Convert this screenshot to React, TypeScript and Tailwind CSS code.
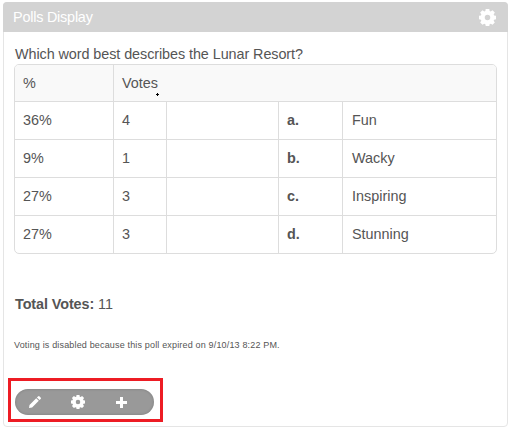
import React from "react";

const rows = [
  { percent: "36%", votes: "4", key: "a.", label: "Fun" },
  { percent: "9%", votes: "1", key: "b.", label: "Wacky" },
  { percent: "27%", votes: "3", key: "c.", label: "Inspiring" },
  { percent: "27%", votes: "3", key: "d.", label: "Stunning" },
];

function Gear({ className }: { className: string }) {
  return (
    <svg viewBox="0 0 16 16" className={className} fill="currentColor">
      <path
        fillRule="evenodd"
        d="M6.3 0h3.4l.3 1.9 1 .4 1.7-1.1 2.2 2.2-1.1 1.7.4 1 1.8.3v3.3l-1.8.4-.4 1 1.1 1.6-2.2 2.2-1.7-1-1 .4-.3 1.7H6.3L6 14.3l-1-.4-1.7 1-2.2-2.2 1.1-1.6-.4-1L0 9.7V6.4l1.8-.3.4-1-1.1-1.7 2.2-2.2L5 2.3l1-.4zM8 5.4a2.6 2.6 0 1 0 0 5.2 2.6 2.6 0 0 0 0-5.2z"
      />
    </svg>
  );
}

export default function App() {
  return (
    <div className="h-[431px] w-[511px] bg-white pl-[3px] pt-[2px] font-['Liberation_Sans',Arial,sans-serif] text-[14.4px] leading-5 text-[#555]">
      <section className="flex h-[425px] w-[505px] flex-col rounded-[4px] border border-[#e5e5e5]">
        <header className="-mx-px -mt-px flex h-[30px] shrink-0 items-center justify-between rounded-t-[4px] bg-[#d3d3d3] pl-[10px] pr-3 text-white">
          <h1 className="tracking-[-0.21px]">Polls Display</h1>
          <Gear className="size-[17px]" />
        </header>
        <div className="flex flex-col pl-[10px] pt-[12px]">
          <p className="h-5 pl-px tracking-[-0.075px]">Which word best describes the Lunar Resort?</p>
          <div className="h-[190px] w-[483px] overflow-hidden rounded-[5px] border border-[#ddd]">
            <div className="grid h-9 grid-cols-[98px_1fr] bg-[#f9f9f9]">
              <div className="px-2 pt-2">%</div>
              <div className="relative border-l border-[#ddd] px-2 pt-2">
                Votes
                <span className="absolute left-[42px] top-[29px] h-px w-[3px] bg-black" />
                <span className="absolute left-[43px] top-[28px] h-[3px] w-px bg-black" />
              </div>
            </div>
            {rows.map((row) => (
              <div key={row.key} className="grid h-[38px] grid-cols-[98px_53px_112px_64px_1fr] border-t border-[#ddd]">
                <div className="px-2 pt-2">{row.percent}</div>
                <div className="border-l border-[#ddd] px-2 pt-2">{row.votes}</div>
                <div className="border-l border-[#ddd]" />
                <div className="border-l border-[#ddd] px-2 pt-2 font-bold">{row.key}</div>
                <div className="border-l border-[#ddd] pl-[9px] pt-2">{row.label}</div>
              </div>
            ))}
          </div>
          <p className="mt-10 pl-px tracking-[-0.09px]"><strong>Total Votes:</strong> 11</p>
          <p className="mt-[25px] h-3 text-[9px] leading-3 tracking-[0.165px]">
            Voting is disabled because this poll expired on 9/10/13 8:22 PM.
          </p>
          <div className="-ml-[6px] mt-[27px] h-[44px] w-[155px] border-[3px] border-[#ed1c24] pl-1 pt-2">
            <div className="flex h-[26px] w-[139px] items-center rounded-full bg-[#999] pl-[14px] text-white shadow-[inset_0_0_3px_rgba(0,0,0,0.2)]">
              <svg viewBox="0 0 12 12" className="size-3" fill="currentColor">
                <path d="M0 12l.5-3.1 6.7-6.7 2.6 2.6-6.7 6.7zM7.9 1.5L9 .4q.8-.8 1.6 0l1 1q.8.8 0 1.6l-1.1 1.1z" />
              </svg>
              <Gear className="ml-[30px] size-[14px]" />
              <svg viewBox="0 0 11 11" className="ml-[31px] size-[11px]" fill="currentColor">
                <path d="M4 0h3v4h4v3H7v4H4V7H0V4h4z" />
              </svg>
            </div>
          </div>
        </div>
      </section>
    </div>
  );
}
